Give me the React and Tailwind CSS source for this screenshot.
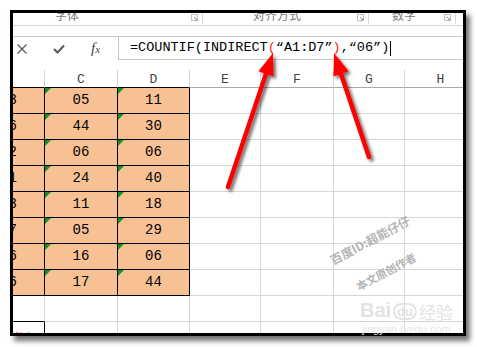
import React from "react";

// spreadsheet columns, widths picked so grid lines land where the screenshot has them
const COLS = [
  { key: "B", w: "w-[72px] -ml-[40px]" },
  { key: "C", w: "w-[73px]" },
  { key: "D", w: "w-[72px]" },
  { key: "E", w: "w-[71px]" },
  { key: "F", w: "w-[73px]" },
  { key: "G", w: "w-[71px]" },
  { key: "H", w: "w-[72px]" },
];

const DATA = [
  ["13", "05", "11"],
  ["26", "44", "30"],
  ["12", "06", "06"],
  ["31", "24", "40"],
  ["23", "11", "18"],
  ["17", "05", "29"],
  ["26", "16", "06"],
  ["16", "17", "44"],
];

const mono = "font-['Liberation_Mono','DejaVu_Sans_Mono',monospace]";
const cjk = "font-['Noto_Sans_CJK_SC',sans-serif]";

function Launcher() {
  return (
    <svg width="7" height="7" viewBox="0 0 7 7" className="shrink-0">
      <rect x="0.5" y="0.5" width="6" height="6" fill="none" stroke="#c4c4c4" />
      <path d="M3 3 L6 6 M4 6 L6 6 L6 4" stroke="#9a9a9a" strokeWidth="1" fill="none" />
    </svg>
  );
}

function Group({ w, pad, label }) {
  return (
    <div className={`${w} flex items-start border-r border-[#dadada] h-[11px] shrink-0`}>
      <span className={`${pad} ${cjk} text-[12px] leading-[12px] -mt-[4px] text-[#7a7a7a]`}>{label}</span>
      <div className="ml-auto mr-[4px] mt-[1px]">
        <Launcher />
      </div>
    </div>
  );
}

function Tri() {
  return (
    <svg width="6" height="6" viewBox="0 0 6 6" className="absolute left-0 top-0">
      <path d="M0 0 L6 0 L0 6 Z" fill="#1b8f1b" />
    </svg>
  );
}

function HeaderRow() {
  return (
    <div className="flex h-[18px] shrink-0">
      {COLS.map((c, i) => (
        <div
          key={c.key}
          className={`${c.w} shrink-0 border-r border-[#d6d6d6] border-b ${i < 3 ? "border-b-black" : "border-b-[#a9a9a9]"} flex items-end justify-center pb-[1px] ${mono} text-[13px] leading-none text-[#444]`}
        >
          {c.key}
        </div>
      ))}
    </div>
  );
}

function DataRow({ vals }) {
  return (
    <div className="flex h-[26px] shrink-0">
      {COLS.map((c, i) => {
        const orange = i < 3;
        return (
          <div
            key={c.key}
            className={`${c.w} shrink-0 relative border-r border-b flex items-center justify-center ${mono} text-[14px] text-black ${
              orange ? "bg-[#f8c194] border-black" : "border-[#d6d6d6]"
            }`}
          >
            {orange && i > 0 && <Tri />}
            {orange ? vals[i] : ""}
          </div>
        );
      })}
    </div>
  );
}

function Arrow({ x1, y1, x2, y2 }) {
  const dx = x2 - x1;
  const dy = y2 - y1;
  const len = Math.hypot(dx, dy);
  const ux = dx / len;
  const uy = dy / len;
  const hl = 22;
  const hw = 8;
  const bx = x2 - ux * hl;
  const by = y2 - uy * hl;
  const pts = `${x2},${y2} ${bx - uy * hw},${by + ux * hw} ${bx + uy * hw},${by - ux * hw}`;
  return (
    <g filter="url(#shadow)">
      <line x1={x1} y1={y1} x2={bx + ux * 2} y2={by + uy * 2} stroke="#ff0000" strokeWidth="4.5" strokeLinecap="round" />
      <polygon points={pts} fill="#ff0000" />
    </g>
  );
}

export default function App() {
  return (
    <div className="relative w-[477px] h-[347px] bg-white overflow-hidden">
      {/* framed excel crop */}
      <div className="ml-[10px] mt-[10px] w-[456px] h-[326px] border-[3px] border-black overflow-hidden bg-white shadow-[4px_5px_5px_rgba(0,0,0,0.55)] flex flex-col">
        {/* ribbon group labels */}
        <div className="flex h-[13px] border-b border-[#d4d4d4] shrink-0">
          <Group w="w-[190px]" pad="ml-[42px]" label="字体" />
          <Group w="w-[166px]" pad="ml-[50px]" label="对齐方式" />
          <Group w="w-[87px]" pad="ml-[23px]" label="数字" />
        </div>

        <div className="h-[10px] shrink-0" />

        {/* formula bar */}
        <div className="flex h-[24px] border-t border-[#c8c8c8] shrink-0">
          <div className="w-[105px] flex items-center shrink-0">
            <svg width="10" height="10" viewBox="0 0 10 10" className="ml-[4px]">
              <path d="M0.5 0.5 L9.5 9.5 M9.5 0.5 L0.5 9.5" stroke="#5a5a5a" strokeWidth="1.3" />
            </svg>
            <svg width="12" height="10" viewBox="0 0 12 10" className="ml-[26px]">
              <path d="M1 5 L4.5 8.5 L11 1.5" stroke="#5f5f5f" strokeWidth="2.2" fill="none" strokeLinejoin="round" />
            </svg>
            <span className="ml-[26px] font-['Liberation_Serif',serif] italic text-[#444] text-[15px] leading-none">
              f<span className="text-[11px]">x</span>
            </span>
          </div>
          <div className={`flex-1 h-[23px] border-l border-b border-[#c8c8c8] flex items-center pl-[11px] ${mono} text-[13.5px] text-black whitespace-nowrap`}>
            <span>=COUNTIF(INDIRECT</span>
            <span className="text-[#ff2020]">(</span>
            <span>“A1:D7”</span>
            <span className="text-[#ff2020]">)</span>
            <span>,“06”)</span>
            <span className="w-px h-[15px] bg-black ml-[1px]" />
          </div>
        </div>

        <div className="h-[10px] shrink-0" />

        {/* grid */}
        <HeaderRow />
        {DATA.map((r, i) => (
          <DataRow key={i} vals={r} />
        ))}
        <div className="flex h-[26px] shrink-0">
          {COLS.map((c, i) => (
            <div
              key={c.key}
              className={`${c.w} shrink-0 border-r border-b border-[#d6d6d6] ${i === 0 ? "border-b-black" : ""}`}
            />
          ))}
        </div>
        <div className="flex h-[26px] shrink-0">
          {COLS.map((c, i) => (
            <div
              key={c.key}
              className={`${c.w} shrink-0 border-r ${i === 0 ? "border-black pl-[40px] pt-[3px]" : "border-[#d6d6d6]"}`}
            >
              {i === 0 && <span className={`${cjk} text-[13px] leading-none text-[#ff0000]`}>数据</span>}
            </div>
          ))}
        </div>
      </div>

      {/* watermark */}
      <div className={`absolute left-[318px] top-[234px] w-[104px] text-center -rotate-[28deg] ${cjk} font-bold text-[12px] leading-none text-[#b4b4b4] whitespace-nowrap`}>
        百度ID:超能仔仔
      </div>
      <div className={`absolute left-[350px] top-[266px] w-[72px] text-center -rotate-[28deg] ${cjk} font-bold text-[11px] leading-none text-[#b4b4b4] whitespace-nowrap`}>
        本文原创作者
      </div>
      <div className="absolute left-[360px] top-[300px] flex items-end text-[#e3e3e3] leading-none">
        <span className="font-['Liberation_Sans',sans-serif] font-bold text-[20px]">Bai</span>
        <span className="font-['Liberation_Sans',sans-serif] font-bold text-[13px] border-2 border-[#e3e3e3] rounded-full px-[2px] mx-[2px]">du</span>
        <span className={`${cjk} text-[17px]`}>经验</span>
      </div>
      <div className="absolute left-[362px] top-[324px] font-['Liberation_Sans',sans-serif] text-[11px] leading-none text-[#e6e6e6]">
        jingyan.baidu.com
      </div>

      {/* red arrows */}
      <svg className="absolute left-0 top-0" width="477" height="347" viewBox="0 0 477 347">
        <defs>
          <filter id="shadow" x="-50%" y="-50%" width="200%" height="200%">
            <feDropShadow dx="2.5" dy="2.5" stdDeviation="1.6" floodColor="#000" floodOpacity="0.55" />
          </filter>
        </defs>
        <Arrow x1={228} y1={187} x2={273} y2={53} />
        <Arrow x1={369} y1={157} x2={334} y2={53} />
      </svg>
    </div>
  );
}
